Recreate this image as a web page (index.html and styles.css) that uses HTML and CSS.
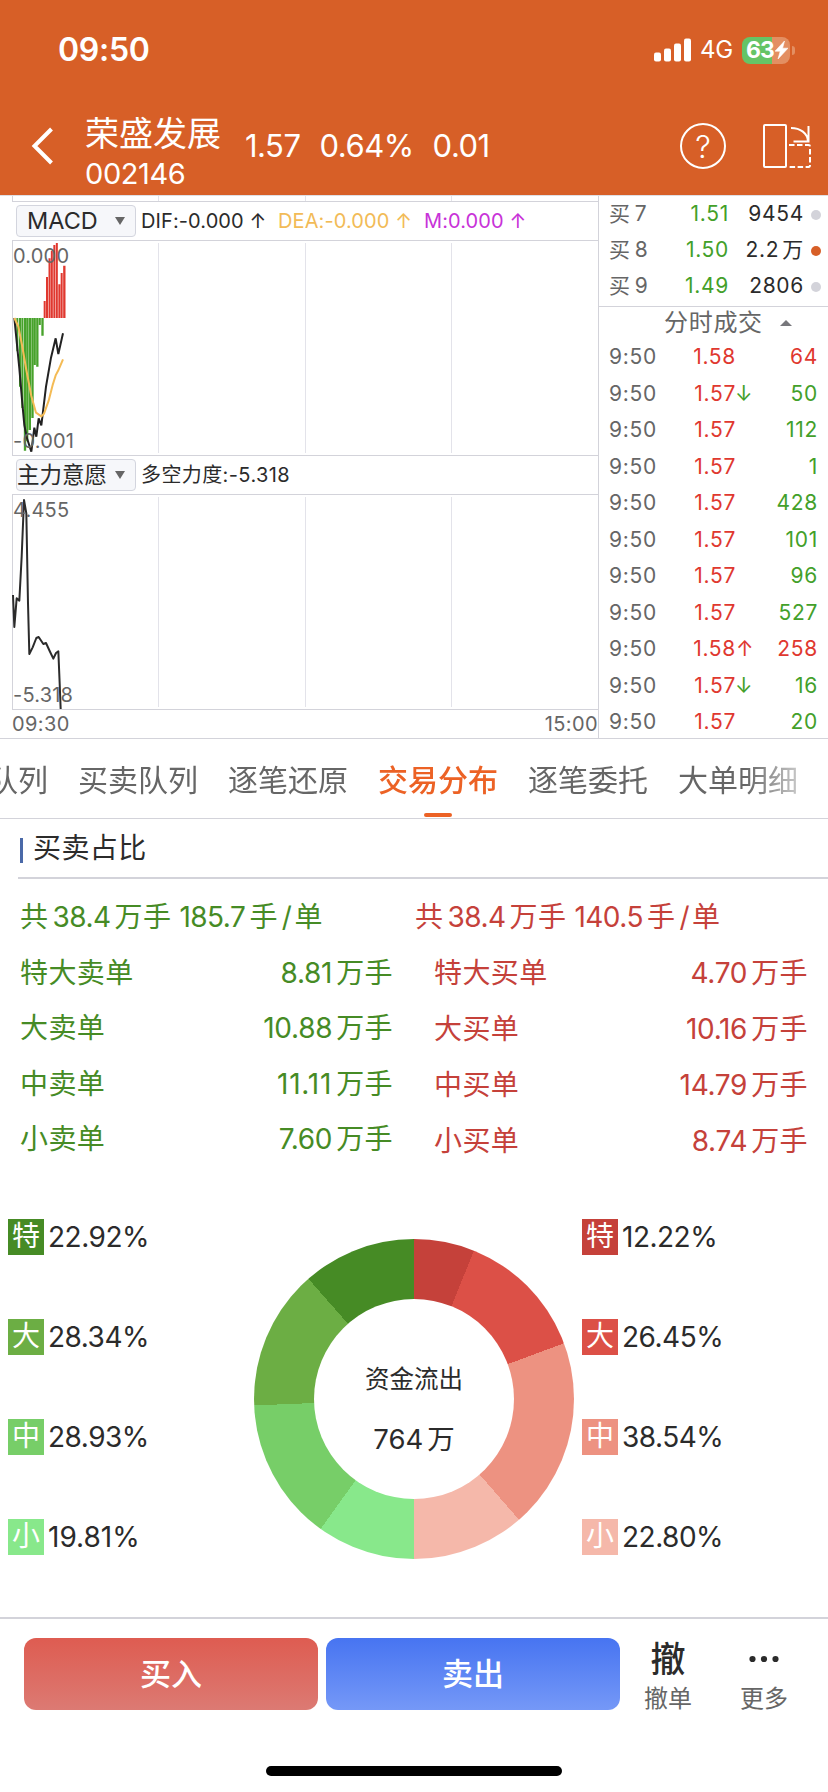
FILE: index.html
```html
<!DOCTYPE html>
<html lang="zh-CN">
<head>
<meta charset="utf-8">
<title>荣盛发展 002146</title>
<link rel="stylesheet" href="styles.css">
</head>
<body>
<div class="screen">
  <header class="header">
    <div class="status">
      <span class="clock">09:50</span>
      <div class="status-right">
        <svg class="signal" width="37" height="24" viewBox="0 0 37 24" fill="#fff"><rect x="0" y="14.5" width="7" height="9" rx="2"/><rect x="10" y="10.500" width="7" height="13" rx="2"/><rect x="20" y="5.500" width="7" height="18" rx="2"/><rect x="30" y="0.500" width="7" height="23" rx="2"/></svg>
        <span class="net">4G</span>
        <div class="battery"><span>63</span><svg width="13" height="18" viewBox="0 0 13 18"><path d="M9.500 0 0 10.200h5.200L3 18 13 7.200H7.600z" fill="#fff" stroke="#fff" stroke-width=".6"/></svg></div>
        <i class="cap"></i>
      </div>
    </div>
    <div class="nav">
      <svg class="back" width="24" height="38" viewBox="0 0 24 38" fill="none" stroke="#fff" stroke-width="4"><path d="M20.500 2 3.500 19l17 17"/></svg>
      <div class="stock"><span class="name">荣盛发展</span><span class="code">002146</span></div>
      <div class="quote"><span>1.57</span><span>0.64%</span><span>0.01</span></div>
      <div class="help"><span>?</span></div>
      <svg class="rotate" width="50" height="46" viewBox="0 0 50 46" fill="none" stroke="#fff" stroke-width="2"><rect x="2" y="2" width="22" height="42" rx="1"/><path d="M29 5c9 0 17 5 17 14M46.500 3v15.500H31.500"/><path d="M27 22h19.500q1.500 0 1.500 1.500V42q0 2-1.500 2H27" stroke-dasharray="5.500 2.500"/></svg>
    </div>
  </header>

  <section class="market">
    <div class="charts">
      <div class="sliver grid"></div>
      <div class="ind">
        <div class="pill macd"><span>MACD</span><i></i></div>
        <span class="dif">DIF:-0.000 ↑</span><span class="dea">DEA:-0.000 ↑</span><span class="mm">M:0.000 ↑</span>
      </div>
      <div class="plot grid">
        <svg class="curve" width="60" height="214" viewBox="36 153 180 642" fill="none">
          <path fill="#47a22b" d="M49 384h6v100h-6zM57 384h6v206h-6zM64 384h6v270h-6zM71.500 384h7v398h-7zM79 384h6v370h-6zM86 384h7v336h-7zM94 384h7v300h-7zM101.500 384h6v141h-6zM108.500 384h7v146h-7zM116.500 384h6v21h-6zM124 384h7v53h-7z"/>
          <path fill="#e0382f" d="M131 384v-51h6v51zM138 384V261h6v123zM145.500 384V205h6v179zM152.500 384V183h6v201zM160 384V165h6v219zM167.500 384V159h6v225zM175 384V283h6v101zM182 384V249h6v135zM189.500 384V227h7v157z"/>
          <path stroke="#222" stroke-width="6" d="M43 384 58 535 67 640 73 705 81 745 94 785 103 713 109 740 116 685 124 706 138 590 153 503 167 445 175 492 189 430"/>
          <path stroke="#f4bb55" stroke-width="6" d="M43 384 55 410 66 465 79 540 94 618 108 668 124 679 132 671 146 632 158 585 167 556 175 541 189 508"/>
        </svg>
        <span class="top">0.000</span><span class="bot">-0.001</span>
      </div>
      <div class="ind">
        <div class="pill main"><span>主力意愿</span><i></i></div>
        <span class="power">多空力度:-5.318</span>
      </div>
      <div class="plot grid">
        <svg class="curve" width="60" height="214" viewBox="36 135 180 642" fill="none"><path stroke="#2b2b2b" stroke-width="6" stroke-linejoin="round" d="M39 435 43 531 50 445 58 452 65 320 72 150 79 190 84 460 88 612 98 592 109 564 116 561 130 582 138 579 149 603 160 626 168 609 175 604 179 700 182 777"/></svg>
        <span class="top">4.455</span><span class="bot">-5.318</span>
      </div>
      <div class="axis"><span>09:30</span><span>15:00</span></div>
    </div>
    <div class="book">
      <div class="bids">
        <div class="bid"><span>买<b>7</b></span><em>1.51</em><strong>9454</strong><i></i></div>
        <div class="bid"><span>买<b>8</b></span><em>1.50</em><strong>2.2<b>万</b></strong><i class="hot"></i></div>
        <div class="bid"><span>买<b>9</b></span><em>1.49</em><strong>2806</strong><i></i></div>
      </div>
      <div class="ticks-title"><span>分时成交</span><i></i></div>
      <div class="ticks">
        <div class="tick"><span>9:50</span><em>1.58</em><u></u><strong class="up">64</strong></div>
        <div class="tick"><span>9:50</span><em>1.57</em><u class="dn">↓</u><strong>50</strong></div>
        <div class="tick"><span>9:50</span><em>1.57</em><u></u><strong>112</strong></div>
        <div class="tick"><span>9:50</span><em>1.57</em><u></u><strong>1</strong></div>
        <div class="tick"><span>9:50</span><em>1.57</em><u></u><strong>428</strong></div>
        <div class="tick"><span>9:50</span><em>1.57</em><u></u><strong>101</strong></div>
        <div class="tick"><span>9:50</span><em>1.57</em><u></u><strong>96</strong></div>
        <div class="tick"><span>9:50</span><em>1.57</em><u></u><strong>527</strong></div>
        <div class="tick"><span>9:50</span><em>1.58</em><u class="up">↑</u><strong class="up">258</strong></div>
        <div class="tick"><span>9:50</span><em>1.57</em><u class="dn">↓</u><strong>16</strong></div>
        <div class="tick"><span>9:50</span><em>1.57</em><u></u><strong>20</strong></div>
      </div>
    </div>
  </section>

  <nav class="tabs">
    <span class="tab">队列</span><span class="tab">买卖队列</span><span class="tab">逐笔还原</span><span class="tab active">交易分布</span><span class="tab">逐笔委托</span><span class="tab">大单明细</span>
  </nav>

  <h2 class="section-title"><i></i>买卖占比</h2>

  <section class="ratio">
    <div class="side sell">
      <p class="sum">共<b>38.4</b>万手<b class="sp">185.7</b>手<b class="slash">/</b>单</p>
      <p><span>特大卖单</span><span><b>8.81</b>万手</span></p>
      <p><span>大卖单</span><span><b>10.88</b>万手</span></p>
      <p><span>中卖单</span><span><b class="ones">11.11</b>万手</span></p>
      <p><span>小卖单</span><span><b>7.60</b>万手</span></p>
    </div>
    <div class="side buy">
      <p class="sum">共<b>38.4</b>万手<b class="sp">140.5</b>手<b class="slash">/</b>单</p>
      <p><span>特大买单</span><span><b>4.70</b>万手</span></p>
      <p><span>大买单</span><span><b>10.16</b>万手</span></p>
      <p><span>中买单</span><span><b>14.79</b>万手</span></p>
      <p><span>小买单</span><span><b>8.74</b>万手</span></p>
    </div>
  </section>

  <section class="flow">
    <div class="legend">
      <div><i class="g1">特</i>22.92%</div>
      <div><i class="g2">大</i>28.34%</div>
      <div><i class="g3">中</i>28.93%</div>
      <div><i class="g4">小</i><span class="ones">19.81%</span></div>
    </div>
    <div class="donut">
      <div class="hole"><span class="flow-label">资金流出</span><span class="flow-value">764<b>万</b></span></div>
    </div>
    <div class="legend right">
      <div><i class="r1">特</i>12.22%</div>
      <div><i class="r2">大</i>26.45%</div>
      <div><i class="r3">中</i>38.54%</div>
      <div><i class="r4">小</i>22.80%</div>
    </div>
  </section>

  <footer class="actions">
    <button class="btn buy-btn">买入</button>
    <button class="btn sell-btn">卖出</button>
    <div class="act"><span class="ico">撤</span><span>撤单</span></div>
    <div class="act"><span class="ico"><svg width="30" height="8" viewBox="0 0 30 8" fill="#2b2b2b"><circle cx="3.500" cy="4" r="3.100"/><circle cx="15" cy="4" r="3.100"/><circle cx="26.500" cy="4" r="3.100"/></svg></span><span>更多</span></div>
  </footer>
  <div class="home"></div>
</div>
</body>
</html>
```

FILE: styles.css
```css
* { box-sizing: border-box; }
body { margin: 0; background: #fff; }
i, em, b, strong, u { font-style: normal; font-weight: inherit; text-decoration: none; }
p, h2 { margin: 0; }
.screen {
  width: 828px; height: 1792px; overflow: hidden;
  display: flex; flex-direction: column;
  font-family: Inter, "Noto Sans CJK SC", sans-serif;
  color: #2b2b2b; line-height: 1; white-space: nowrap;
}

/* header */
.header { height: 195px; background: #d75f27; color: #fff; flex: none; }
.status { height: 100px; display: flex; justify-content: space-between; padding: 0 33px 0 58px; }
.clock { font-size: 32px; font-weight: 600; line-height: 100px; letter-spacing: -.3px; }
.status-right { display: flex; align-items: center; }
.signal { margin-right: 9px; }
.net { font-size: 24px; width: 42px; letter-spacing: -.3px; }
.battery {
  width: 48px; height: 27px; border-radius: 8px; display: flex; align-items: center; gap: 1px; padding-left: 4px;
  background: linear-gradient(90deg, #65c466 63%, #e38f62 63%);
  font-size: 23px; font-weight: 700; letter-spacing: -1px;
}
.battery svg { flex: none; }
.cap { width: 3px; height: 9px; margin-left: 2px; border-radius: 0 4px 4px 0; background: #e38f62; }
.nav { height: 95px; display: flex; align-items: flex-start; padding-left: 31px; }
.back { margin-top: 27px; }
.stock { width: 160px; margin: 17px 0 0 30px; display: flex; flex-direction: column; }
.name { font-size: 34px; line-height: 34px; }
.code { font-size: 29px; line-height: 46px; letter-spacing: -.4px; }
.quote { width: 434px; margin-top: 30px; display: flex; gap: 19px; font-size: 31px; line-height: 32px; letter-spacing: -.5px; }
.help { width: 46px; height: 46px; margin: 23px 0 0 1px; border: 2px solid #fff; border-radius: 50%; font-size: 31px; line-height: 43px; text-align: center; font-weight: 350; }
.rotate { margin: 23px 0 0 36px; }

/* charts and order book */
.market { height: 544px; display: flex; border-bottom: 1px solid #d3d3da; border-top: 1px solid #dfdfe4; flex: none; }
.charts { width: 599px; border-right: 1px solid #d3d3da; }
.grid {
  margin-left: 12px; border-left: 1px solid #d3d3da; border-bottom: 1px solid #d3d3da;
  background: linear-gradient(#e3e3ea, #e3e3ea) 145px 0 / 1px 100% no-repeat,
    linear-gradient(#e3e3ea, #e3e3ea) 292px 0 / 1px 100% no-repeat,
    linear-gradient(#e3e3ea, #e3e3ea) 438px 0 / 1px 100% no-repeat;
}
.sliver { height: 6px; }
.ind { height: 39px; margin-left: 12px; padding-left: 4px; display: flex; align-items: center; border-bottom: 1px solid #d3d3da; font-size: 20px; letter-spacing: .1px; }
.pill { width: 120px; height: 32px; margin-right: 5px; display: flex; align-items: center; justify-content: space-between; padding-right: 10px; border: 1px solid #d3d5de; border-radius: 4px; background: #f6f7fa; letter-spacing: 0; }
.pill.main { font-size: 22.500px; }
.pill.macd { padding-left: 10px; font-size: 23.500px; }
.pill i { border: 5px solid transparent; border-top: 8px solid #666; border-bottom: 0; }
.dif { width: 137px; }
.dea { width: 146px; color: #f2bb57; }
.mm { color: #c832d8; }
.power { letter-spacing: .4px; }
.plot { height: 215px; position: relative; color: #666; font-size: 20px; letter-spacing: .2px; }
.plot.grid { background-position: 145px 2px, 292px 2px, 438px 2px; background-size: 1px 210px; }
.plot .top { position: absolute; left: 0; top: 5px; }
.plot .bot { position: absolute; left: 0; bottom: 4px; }
.curve { position: absolute; left: -1px; top: 0; }
.axis { display: flex; justify-content: space-between; padding: 4px 0 0 12px; color: #666; font-size: 20px; letter-spacing: .4px; }
.book { flex: 1; color: #666; font-size: 21px; letter-spacing: .7px; padding-left: 1px; }
.bids { height: 111px; margin-left: -1px; padding-left: 1px; border-bottom: 1px solid #d3d3da; }
.bid { height: 36px; display: grid; grid-template-columns: 55px 65px 75px 16px; padding-left: 9px; line-height: 36px; }
.bid em { text-align: right; color: #43a02a; }
.bid strong { text-align: right; color: #2b2b2b; }
.bid b { margin-left: 4px; }
.bid strong b { margin-left: 3px; }
.bid i { width: 10px; height: 10px; margin: 14px 0 0 7px; border-radius: 50%; background: #d3d3da; }
.bid i.hot { background: #d75f27; }
.ticks-title { height: 31px; display: flex; align-items: center; padding-left: 64px; gap: 17px; font-size: 24px; }
.ticks-title i { border: 6px solid transparent; border-bottom: 6px solid #77777c; border-top: 0; }
.tick { height: 36.54px; display: grid; grid-template-columns: 60px 67px 15px 67px; padding-left: 9px; line-height: 37px; }
.tick em { text-align: right; color: #e0382f; }
.tick strong { text-align: right; color: #43a02a; }
.tick .up { color: #e0382f; }
.tick .dn { color: #43a02a; margin-left: -1px; }

/* tabs */
.tabs { height: 80px; display: flex; justify-content: flex-start; gap: 30px; border-bottom: 1px solid #d3d3da; font-size: 30px; line-height: 83px; color: #666; overflow: hidden; flex: none; -webkit-mask: linear-gradient(#000, #000) bottom / 100% 1px no-repeat, linear-gradient(90deg, #000 745px, transparent 828px); mask: linear-gradient(#000, #000) bottom / 100% 1px no-repeat, linear-gradient(90deg, #000 745px, transparent 828px); }
.tab { position: relative; flex: none; width: 120px; }
.tab:first-child { width: 48px; display: flex; justify-content: flex-end; }
.active { color: #ec6225; font-weight: 500; }
.active::after { content: ""; position: absolute; left: 46px; top: 74px; width: 28px; height: 4px; border-radius: 2px; background: #ec6225; }

.section-title { height: 60px; margin-left: 18px; padding-left: 2px; display: flex; align-items: center; gap: 10px; border-bottom: 2px solid #d3d3da; font-size: 28px; font-weight: 400; letter-spacing: .4px; flex: none; }
.section-title i { width: 3px; height: 25px; margin-top: 4px; background: #4a69a8; }

/* order size breakdown */
.ratio { display: flex; justify-content: space-between; height: 320px; padding: 11px 20px 0 20px; flex: none; font-size: 28px; letter-spacing: .4px; }
.side { width: 373px; }
.side p { height: 55.5px; line-height: 55px; display: flex; justify-content: space-between; }
.side b { margin-right: 4px; letter-spacing: -.3px; }
.side .ones { letter-spacing: .8px; }
.side .sum { justify-content: flex-start; }
.sum b { margin: 0 4px 0 4px; letter-spacing: -.5px; }
.sum .sp { margin-left: 8px; }
.sum .slash { margin: 0 3px 0 4px; }
.sell { color: #468b25; }
.buy { width: 393px; color: #c5413a; padding-left: 19px; }
.buy p { height: 56px; }
.buy .sum { margin-left: -19px; }

/* donut */
.flow { height: 418px; display: grid; grid-template-columns: 246px 336px 246px; padding-top: 20px; flex: none; }
.legend { padding-left: 8px; font-size: 28px; letter-spacing: -.5px; }
.legend .ones { letter-spacing: 0; }
.legend div { height: 100px; display: flex; gap: 4px; line-height: 37px; }
.legend i { width: 36px; height: 36px; text-align: center; color: #fff; line-height: 35px; letter-spacing: 0; }
.donut {
  width: 320px; height: 320px; margin: 20px 0 0 8px; border-radius: 50%; display: grid; place-items: center;
  background: conic-gradient(#c5413a 0 22deg, #dc5047 22deg 69.600deg, #ed9281 69.600deg 139deg, #f5b8aa 139deg 180deg, #88e88b 180deg 215.700deg, #77ce68 215.700deg 267.700deg, #6cae44 267.700deg 318.700deg, #468b25 318.700deg);
}
.legend.right { padding-left: 0; }
.hole { width: 200px; height: 200px; border-radius: 50%; background: #fff; display: flex; flex-direction: column; align-items: center; padding-top: 66px; }
.flow-label { font-size: 24.500px; line-height: 28px; }
.flow-value { font-size: 27.500px; line-height: 30px; margin-top: 31px; }
.flow-value b { margin-left: 4px; }
.g1 { background: #468b25; } .g2 { background: #6cae44; } .g3 { background: #77ce68; } .g4 { background: #88e88b; }
.r1 { background: #c5413a; } .r2 { background: #dc5047; } .r3 { background: #ed9281; } .r4 { background: #f5b8aa; }

/* actions */
.actions { height: 148px; border-top: 2px solid #d3d3da; display: flex; padding: 19px 0 0 24px; flex: none; }
.btn { width: 294px; height: 72px; margin: 0 8px 0 0; padding: 0; border: 0; border-radius: 12px; color: #fff; font: 500 31px/70px Inter, "Noto Sans CJK SC", sans-serif; }
.buy-btn { background: linear-gradient(#de5c51, #dc7a73); }
.sell-btn { background: linear-gradient(#4774f1, #7598f7); }
.act { width: 96px; display: flex; flex-direction: column; align-items: center; color: #666; font-size: 24px; }
.act:nth-child(3) { margin-left: -8px; }
.ico { height: 49px; display: flex; align-items: center; padding-bottom: 7px; font-size: 35px; color: #2b2b2b; font-weight: 500; }
.home { width: 296px; height: 10px; margin: 1px auto 0; border-radius: 5px; background: #000; flex: none; }
```
